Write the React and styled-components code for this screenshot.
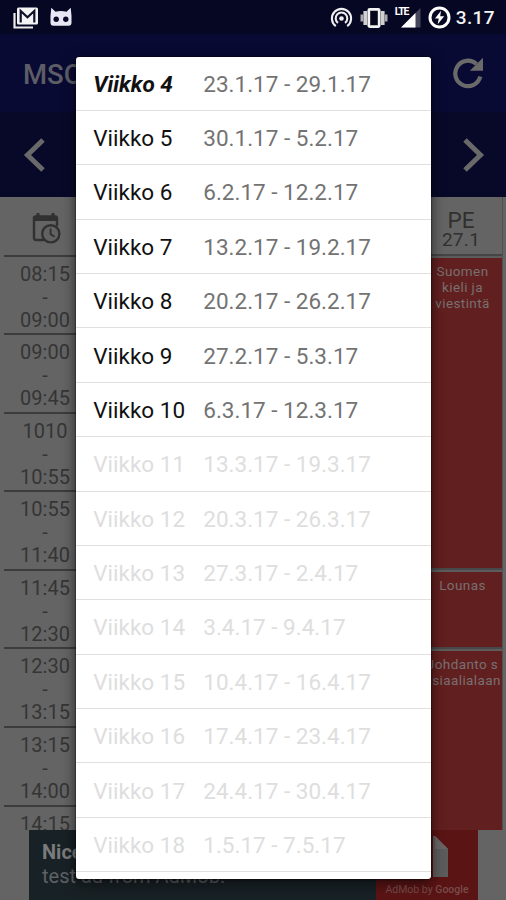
/* eslint-disable react/prop-types */
import styled, { createGlobalStyle } from 'styled-components';

const weeks = [
    { number: 4, range: '23.1.17 - 29.1.17', current: true },
    { number: 5, range: '30.1.17 - 5.2.17' },
    { number: 6, range: '6.2.17 - 12.2.17' },
    { number: 7, range: '13.2.17 - 19.2.17' },
    { number: 8, range: '20.2.17 - 26.2.17' },
    { number: 9, range: '27.2.17 - 5.3.17' },
    { number: 10, range: '6.3.17 - 12.3.17' },
    { number: 11, range: '13.3.17 - 19.3.17', disabled: true },
    { number: 12, range: '20.3.17 - 26.3.17', disabled: true },
    { number: 13, range: '27.3.17 - 2.4.17', disabled: true },
    { number: 14, range: '3.4.17 - 9.4.17', disabled: true },
    { number: 15, range: '10.4.17 - 16.4.17', disabled: true },
    { number: 16, range: '17.4.17 - 23.4.17', disabled: true },
    { number: 17, range: '24.4.17 - 30.4.17', disabled: true },
    { number: 18, range: '1.5.17 - 7.5.17', disabled: true },
];

const times = [
    ['08:15', '09:00'],
    ['09:00', '09:45'],
    ['1010', '10:55'],
    ['10:55', '11:40'],
    ['11:45', '12:30'],
    ['12:30', '13:15'],
    ['13:15', '14:00'],
    ['14:15'],
];

const lessons = [
    { lines: ['Suomen', 'kieli ja', 'viestintä'], slots: 4 },
    { lines: ['Lounas'], slots: 1 },
    { lines: ['Johdanto s', 'osiaalialaan'], slots: 3 },
];

const GmailIcon = () => (
    <svg width="28" height="24" viewBox="0 0 28 24">
        <path d="M2.5 7v14.5H21" fill="none" stroke="#ececec" strokeWidth="2.2" />
        <rect x="5" y="1.5" width="21" height="17" rx="1.5" fill="#f4f4f4" />
        <path d="M8.7 16.5V5l6.8 6.2L22.3 5v11.5" fill="none" stroke="#11112c" strokeWidth="2.2" />
    </svg>
);

const CidIcon = () => (
    <svg width="24" height="21" viewBox="0 0 24 21">
        <path d="M2.3.8L6.5 4.7q5.5-1.2 11 0L21.7.8l.8 8v7q0 3-3 3h-15q-3 0-3-3v-7z" fill="#e8e6f4" />
        <circle cx="7.2" cy="12.2" r="2.7" fill="#0a0a28" />
        <circle cx="16.8" cy="12.2" r="2.7" fill="#0a0a28" />
    </svg>
);

const HotspotIcon = () => (
    <svg width="23" height="22" viewBox="0 0 23 22" fill="none" stroke="#eee" strokeWidth="2.1">
        <path d="M5.8 19.2a9.6 9.6 0 1 1 11.4 0" />
        <path d="M8 15.9a5.8 5.8 0 1 1 7 0" />
        <circle cx="11.5" cy="11.5" r="2.3" fill="#eee" stroke="none" />
    </svg>
);

const VibrateIcon = () => (
    <svg width="28" height="20" viewBox="0 0 28 20">
        <rect x="8.8" y="1.4" width="10.4" height="17.2" rx="1" fill="#07071c" stroke="#f2f2f2" strokeWidth="2.8" />
        <path d="M5.2 3v14M22.8 3v14" stroke="#d0d0d0" strokeWidth="3.6" />
        <path d="M1.9 6.5v7M26.1 6.5v7" stroke="#a8a8ae" strokeWidth="2.8" />
    </svg>
);

const SignalIcon = () => (
    <svg width="21" height="20" viewBox="0 0 21 20">
        <path d="M20.5 0v19.5H1z" fill="#45455e" />
        <path d="M15.5 5v14.5H1z" fill="#fff" />
    </svg>
);

const BatteryIcon = () => (
    <svg width="23" height="23" viewBox="0 0 23 23">
        <circle cx="11.5" cy="11.5" r="9.5" fill="none" stroke="#fff" strokeWidth="3" />
        <path d="M13 4.7l-6 7.7h3.7l-1 5.9 6.5-8.1h-4z" fill="#fff" />
    </svg>
);

const RefreshIcon = () => (
    <svg width="32" height="32" viewBox="0 0 32 32">
        <path d="M28.3 19.5A12.7 12.7 0 1 1 24.5 7" fill="none" stroke="#6a6a6a" strokeWidth="4.2" />
        <path d="M31 .8v13H17.8z" fill="#6a6a6a" />
    </svg>
);

const ChevronIcon = ({ right }) => (
    <svg width="22" height="36" viewBox="0 0 22 36">
        <path
            d={right ? 'M2 3l15.5 15L2 33' : 'M20 3L4.5 18 20 33'}
            fill="none"
            stroke="#696969"
            strokeWidth="5"
        />
    </svg>
);

const ScheduleIcon = () => (
    <svg width="29" height="32" viewBox="0 0 29 32">
        <path d="M6 1v5M21 1v5" stroke="#313131" strokeWidth="3" />
        <path d="M12 28H4a2 2 0 0 1-2-2V6a1.5 1.5 0 0 1 1.5-1.5h20A1.5 1.5 0 0 1 25 6v8" fill="none" stroke="#313131" strokeWidth="2.4" />
        <path d="M2 4h23v5H2z" fill="#313131" />
        <circle cx="18.8" cy="21.8" r="8.6" fill="#626262" stroke="#313131" strokeWidth="2.4" />
        <path d="M18.6 16.5v5.7l4 2.6" fill="none" stroke="#313131" strokeWidth="1.9" />
    </svg>
);

const AdMobIcon = () => (
    <svg width="42" height="41" viewBox="0 0 42 41">
        <path d="M0 13L14 0v41H0z" fill="#565656" />
        <path d="M27 0h2l13 13v28H27z" fill="#5c5c5c" />
        <path d="M29 0l13 13H29z" fill="#6a6666" />
    </svg>
);

const StatusBar = () => (
    <StyledStatusBar>
        <GmailIcon />
        <CidIcon />
        <StyledStatusRight>
            <HotspotIcon />
            <VibrateIcon />
            <StyledSignal>
                <StyledLte>LTE</StyledLte>
                <SignalIcon />
            </StyledSignal>
            <BatteryIcon />
            <StyledClock>3.17</StyledClock>
        </StyledStatusRight>
    </StyledStatusBar>
);

const Timetable = () => (
    <StyledTimetable>
        <StyledTimeColumn>
            <StyledTimeHead><ScheduleIcon /></StyledTimeHead>
            {times.map(([start, end]) => (
                <StyledTimeSlot key={start}>
                    <span>{start}</span>
                    {end ? (<><span>-</span><span>{end}</span></>) : ""}
                </StyledTimeSlot>
            ))}
        </StyledTimeColumn>
        <StyledDayColumn>
            <StyledDayHead>
                <strong>PE</strong>
                <span>27.1</span>
            </StyledDayHead>
            {lessons.map(({ lines, slots }) => (
                <StyledLesson key={lines[0]} $slots={slots}>
                    {lines.map((line) => <span key={line}>{line}</span>)}
                </StyledLesson>
            ))}
        </StyledDayColumn>
    </StyledTimetable>
);

const AdBanner = () => (
    <StyledAd>
        <StyledAdText>
            <strong>Nice job!</strong>
            <span>test ad from AdMob.</span>
        </StyledAdText>
        <StyledAdLogo>
            <AdMobIcon />
            <span>AdMob by <b>Google</b></span>
        </StyledAdLogo>
    </StyledAd>
);

const WeekDialog = () => (
    <StyledDialog>
        {weeks.map(({ number, range, current, disabled }) => (
            <StyledWeek key={number}>
                <StyledWeekName $current={current} $disabled={disabled}>Viikko {number}</StyledWeekName>
                <StyledWeekRange $disabled={disabled}>{range}</StyledWeekRange>
            </StyledWeek>
        ))}
    </StyledDialog>
);

const App = () => (
    <StyledScreen>
        <GlobalStyle />
        <StatusBar />
        <StyledAppBar>
            <h1>MSO</h1>
            <RefreshIcon />
        </StyledAppBar>
        <StyledWeekBar>
            <ChevronIcon />
            <ChevronIcon right />
        </StyledWeekBar>
        <Timetable />
        <AdBanner />
        <WeekDialog />
    </StyledScreen>
);
export default App;

const GlobalStyle = createGlobalStyle`
    * {
        box-sizing: border-box;
    }
    body {
        margin: 0;
        font-family: Roboto, sans-serif;
    }
    svg {
        display: block;
        flex: none;
    }
`;

const StyledScreen = styled.div`
    position: relative;
    display: flex;
    flex-direction: column;
    width: 506px;
    height: 900px;
    overflow: hidden;
    background-color: #646464;
`;

const StyledStatusBar = styled.div`
    display: flex;
    align-items: center;
    gap: 9px;
    height: 34px;
    padding: 1px 11px 0 12px;
    background-color: #060722;
`;

const StyledStatusRight = styled.div`
    display: flex;
    align-items: center;
    gap: 7px;
    margin-left: auto;
`;

const StyledSignal = styled.div`
    position: relative;
    padding-left: 5px;
`;

const StyledLte = styled.span`
    position: absolute;
    top: -2px;
    left: 0;
    color: #fff;
    font-size: 10.5px;
    font-weight: 700;
    line-height: 11px;
    letter-spacing: -1.1px;
`;

const StyledClock = styled.span`
    margin-left: -2px;
    color: #f4f4f4;
    font-size: 19px;
    font-weight: 500;
    letter-spacing: .4px;
`;

const StyledAppBar = styled.header`
    display: flex;
    align-items: center;
    justify-content: space-between;
    height: 78px;
    padding: 0 22px 0 23px;
    background-color: #090a33;
    h1 {
        margin: 3px 0 0;
        color: #5d5d66;
        font-size: 27.5px;
        font-weight: 500;
    }
`;

const StyledWeekBar = styled.nav`
    display: flex;
    align-items: center;
    justify-content: space-between;
    height: 85px;
    padding: 1px 21px 0 23px;
    background-color: #080929;
`;

const StyledTimetable = styled.main`
    display: flex;
    justify-content: space-between;
    height: 633px;
    padding: 0 3px 0 4px;
    overflow: hidden;
`;

const StyledTimeColumn = styled.div`
    width: 82px;
`;

const StyledTimeHead = styled.div`
    display: flex;
    align-items: center;
    height: 59.5px;
    padding: 5px 0 0 28px;
    border-bottom: 2px solid #3c3c3c;
`;

const StyledTimeSlot = styled.div`
    display: flex;
    flex-direction: column;
    align-items: center;
    height: 78.6px;
    padding-top: 6px;
    border-bottom: 2px solid #3c3c3c;
    color: #353535;
    font-size: 20px;
    line-height: 23px;
    &:last-child {
        height: 30px;
        border-bottom: 0;
    }
`;

const StyledDayColumn = styled.div`
    width: 80px;
    border-right: 1px solid #505050;
`;

const StyledDayHead = styled.div`
    display: flex;
    flex-direction: column;
    align-items: center;
    height: 59px;
    padding: 12px 3px 0 0;
    border-bottom: 2px solid #454545;
    color: #303030;
    strong {
        font-size: 22.5px;
        font-weight: 400;
        line-height: 22px;
    }
    span {
        font-size: 19px;
        line-height: 18px;
        letter-spacing: .3px;
    }
`;

const StyledLesson = styled.div`
    display: flex;
    flex-direction: column;
    align-items: center;
    height: ${({ $slots }) => $slots * 78.6}px;
    padding-top: 5px;
    border-top: 2px solid #5c5c5c;
    border-bottom: 2px solid #484848;
    background-color: #621f1f;
    color: #777070;
    font-size: 13.5px;
    line-height: 16px;
    letter-spacing: .4px;
`;

const StyledAd = styled.aside`
    display: flex;
    justify-content: space-between;
    width: 449px;
    height: 70px;
    margin-left: 29px;
    background-color: #182125;
`;

const StyledAdText = styled.div`
    display: flex;
    flex-direction: column;
    padding: 10px 13px;
    color: #5e6265;
    font-size: 20px;
    line-height: 24px;
    strong {
        color: #797b7c;
    }
`;

const StyledAdLogo = styled.div`
    display: flex;
    flex-direction: column;
    align-items: center;
    gap: 6px;
    width: 102px;
    padding-top: 6px;
    background-color: #5b1414;
    color: #774c4c;
    font-size: 10.5px;
    line-height: 13px;
    b {
        font-weight: 500;
    }
`;

const StyledDialog = styled.ul`
    position: absolute;
    top: 56.5px;
    left: 76.3px;
    width: 355px;
    height: 822px;
    margin: 0;
    padding: 0;
    list-style: none;
    background-color: #fff;
    border-radius: 3px;
    box-shadow: 0 0 2px #000, 0 4px 14px rgba(0, 0, 0, .6);
`;

const StyledWeek = styled.li`
    display: flex;
    align-items: center;
    height: 54.38px;
    padding: 1px 0 0 17px;
    border-bottom: 1.6px solid #e0e0e0;
    font-size: 22.5px;
`;

const StyledWeekName = styled.span`
    width: 110px;
    color: ${({ $disabled }) => ($disabled ? '#dedede' : '#111')};
    font-style: ${({ $current }) => ($current ? 'italic' : 'normal')};
    font-weight: ${({ $current }) => ($current ? 700 : 400)};
`;

const StyledWeekRange = styled.span`
    color: ${({ $disabled }) => ($disabled ? '#dedede' : '#737373')};
`;
